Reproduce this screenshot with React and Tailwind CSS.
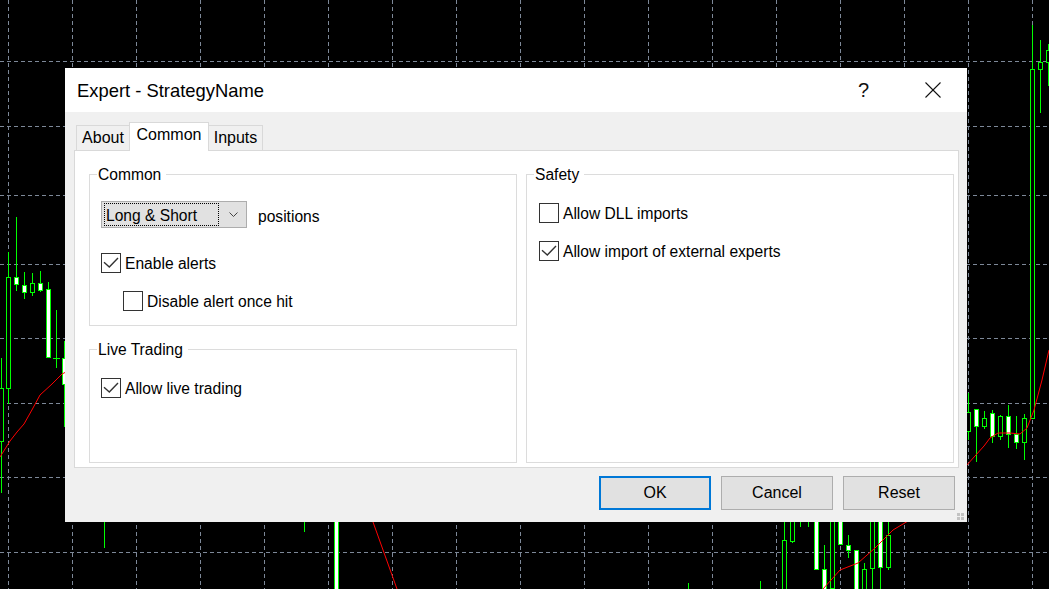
import React from "react";

const GRID_X = Array.from({ length: 17 }, (_, i) => 8 + i * 64);
const GRID_Y = [61, 126, 195, 264, 338, 403, 477, 552];

// [x, wickTop, wickBottom, bodyTop, bodyBottom, white body]
const CANDLES = [
  [1, 358, 493, 388, 441, false],
  [8, 252, 404, 277, 388, false],
  [16, 217, 291, 277, 284, true],
  [24, 272, 299, 285, 292, true],
  [32, 273, 296, 283, 292, false],
  [40, 271, 292, 283, 290, true],
  [48, 282, 358, 289, 357, true],
  [64, 341, 427, 358, 384, true],
  [968, 393, 440, 412, 431, false],
  [976, 409, 462, 409, 426, true],
  [984, 411, 429, 418, 426, false],
  [992, 410, 443, 413, 436, true],
  [1000, 415, 440, 416, 436, false],
  [1008, 405, 448, 416, 434, true],
  [1016, 416, 449, 434, 442, true],
  [1024, 414, 460, 418, 442, false],
  [1032, 25, 418, 69, 418, false],
  [1040, 40, 113, 62, 69, false],
  [1048, 44, 86, 50, 62, false],
  [336, 505, 600, 505, 600, true],
  [784, 505, 600, 540, 600, false],
  [792, 505, 543, 505, 541, false],
  [816, 505, 569, 505, 569, true],
  [824, 545, 600, 569, 600, true],
  [832, 505, 600, 505, 588, false],
  [840, 505, 544, 505, 544, true],
  [848, 535, 558, 545, 550, true],
  [856, 550, 600, 550, 600, true],
  [864, 563, 600, 569, 600, false],
  [872, 505, 600, 505, 568, false],
  [880, 505, 600, 505, 567, true],
  [888, 505, 570, 535, 567, false],
];

// plain wicks with no body
const WICKS = [
  [104, 505, 548],
  [304, 505, 532],
  [688, 583, 600],
  [760, 581, 600],
  [800, 505, 527],
  [808, 505, 527],
];

const RED_LINES = [
  "0,457 10,441 17,432 24,424 33,408 40,395 52,384 62,374 66,372",
  "966,466 975,456 984,446 990,438 998,433 1010,433 1020,434 1027,428 1034,410 1042,380 1049,350",
  "368,505 373,522 397,589",
  "823,589 840,570 858,563 875,548 893,530 913,518",
];

function Chart() {
  return (
    <svg className="absolute inset-0" width="1049" height="589" shapeRendering="crispEdges">
      {GRID_X.map((x) => (
        <line key={"gx" + x} x1={x + 0.5} y1="0" x2={x + 0.5} y2="589" stroke="#7d8898" strokeDasharray="4 3" />
      ))}
      {GRID_Y.map((y) => (
        <line key={"gy" + y} x1="0" y1={y + 0.5} x2="1049" y2={y + 0.5} stroke="#7d8898" strokeDasharray="4 3" />
      ))}
      {WICKS.map(([x, t, b]) => (
        <line key={"w" + x} x1={x + 0.5} y1={t} x2={x + 0.5} y2={b} stroke="#00ff00" />
      ))}
      {CANDLES.map(([x, wt, wb, bt, bb, white]) => (
        <g key={"c" + x}>
          <line x1={x + 0.5} y1={wt} x2={x + 0.5} y2={wb} stroke="#00ff00" />
          <rect x={x - 1.5} y={bt + 0.5} width="4" height={bb - bt} fill={white ? "#ffffff" : "#000000"} stroke="#00ff00" />
        </g>
      ))}
      <line x1="56.5" y1="310" x2="56.5" y2="368" stroke="#00ff00" />
      <line x1="53" y1="358.5" x2="60" y2="358.5" stroke="#00ff00" />
      {RED_LINES.map((p, i) => (
        <polyline key={"r" + i} points={p} fill="none" stroke="#ff0000" shapeRendering="auto" />
      ))}
    </svg>
  );
}

function Check({ checked }) {
  return (
    <span className="w-[20px] h-[20px] border border-[#333333] bg-white flex items-center justify-center shrink-0">
      {checked && (
        <svg width="18" height="18" viewBox="0 0 18 18">
          <polyline points="2,8.3 7.3,13 16,4" fill="none" stroke="#333333" strokeWidth="1.4" />
        </svg>
      )}
    </span>
  );
}

function CheckRow({ checked, label, className = "" }) {
  return (
    <div className={`flex items-center gap-[4px] h-[20px] ${className}`}>
      <Check checked={checked} />
      <span className="text-[15.6px] leading-[20px] pt-[1px] text-black whitespace-nowrap">{label}</span>
    </div>
  );
}

function Group({ title, className = "", children }) {
  return (
    <fieldset className={`border border-[#dcdcdc] p-0 m-0 ${className}`}>
      <legend className="ml-[7px] pl-[1px] pr-[5px] text-[15.6px] leading-[18px] pt-[1px] text-black">{title}</legend>
      {children}
    </fieldset>
  );
}

function Button({ children, primary }) {
  return (
    <div
      className={`w-[112px] h-[34px] bg-[#e1e1e1] flex items-center justify-center text-[16px] text-black ${
        primary ? "border-2 border-[#0078d7]" : "border border-[#adadad]"
      }`}
    >
      {children}
    </div>
  );
}

export default function App() {
  return (
    <div className="relative w-[1049px] h-[589px] bg-black overflow-hidden font-['Liberation_Sans',Arial,sans-serif]">
      <Chart />

      {/* Dialog window */}
      <div className="absolute left-[65px] top-[68px] w-[902px] h-[454px] bg-[#f0f0f0] flex flex-col">
        {/* Title bar */}
        <div className="h-[44px] bg-white flex items-center shrink-0">
          <div className="pl-[12px] pt-[1px] text-[18.4px] text-black">Expert - StrategyName</div>
          <div className="ml-auto flex h-full">
            <div className="w-[69px] h-full flex items-center justify-center text-[20px] text-[#111]">?</div>
            <div className="w-[69px] h-full flex items-center justify-center">
              <svg width="16" height="16" viewBox="0 0 16 16">
                <line x1="0.5" y1="0.5" x2="15.5" y2="15.5" stroke="#111" strokeWidth="1.1" />
                <line x1="15.5" y1="0.5" x2="0.5" y2="15.5" stroke="#111" strokeWidth="1.1" />
              </svg>
            </div>
          </div>
        </div>

        {/* Body */}
        <div className="flex-1 pl-[9px] pr-[8px] pt-[10px] flex flex-col">
          {/* Tabs */}
          <div className="flex items-end h-[28px] pl-[2px]">
            <div className="w-[54px] h-[25px] border border-b-0 border-[#d9d9d9] bg-[#f0f0f0] flex items-center justify-center text-[16px] text-black">
              About
            </div>
            <div className="relative z-10 ml-[-1px] mb-[-1px] w-[80px] h-[29px] border border-b-0 border-[#d9d9d9] bg-white flex items-center justify-center pb-[4px] text-[16px] text-black">
              Common
            </div>
            <div className="ml-[-1px] w-[55px] h-[25px] border border-b-0 border-[#d9d9d9] bg-[#f0f0f0] flex items-center justify-center text-[16px] text-black">
              Inputs
            </div>
          </div>

          {/* Tab panel */}
          <div className="h-[318px] bg-white border border-[#d9d9d9] flex pl-[14px] pt-[14px] gap-[9px]">
            <div className="w-[428px] flex flex-col">
              <Group title="Common" className="h-[161px]">
                <div className="pl-[11px] pt-[17px]">
                  <div className="flex items-center">
                    <div className="w-[146px] h-[27px] bg-[#e1e1e1] border border-[#adadad] flex items-center pl-[2px]">
                      <div className="w-[115px] h-[23px] border border-dotted border-black flex items-center pl-[1px] pt-[2px] text-[15.6px] text-black whitespace-nowrap">
                        Long &amp; Short
                      </div>
                      <svg className="ml-[10px]" width="9" height="5" viewBox="0 0 9 5">
                        <polyline points="0.5,0.5 4.5,4.5 8.5,0.5" fill="none" stroke="#444444" />
                      </svg>
                    </div>
                    <span className="ml-[11px] pt-[4px] text-[15.6px] text-black">positions</span>
                  </div>
                  <CheckRow checked label="Enable alerts" className="mt-[25px]" />
                  <CheckRow label="Disable alert once hit" className="mt-[18px] ml-[22px]" />
                </div>
              </Group>
              <Group title="Live Trading" className="mt-[14px] h-[123px]">
                <div className="pl-[11px] pt-[19px]">
                  <CheckRow checked label="Allow live trading" />
                </div>
              </Group>
            </div>
            <Group title="Safety" className="w-[428px] h-[298px]">
              <div className="pl-[12px] pt-[19px]">
                <CheckRow label="Allow DLL imports" />
                <CheckRow checked label="Allow import of external experts" className="mt-[18px]" />
              </div>
            </Group>
          </div>

          {/* Buttons */}
          <div className="flex justify-end gap-[10px] mt-[8px] pr-[4px]">
            <Button primary>OK</Button>
            <Button>Cancel</Button>
            <Button>Reset</Button>
          </div>
        </div>

        {/* Resize grip */}
        <div className="absolute right-[3px] bottom-[2px] grid grid-cols-2 gap-[1px]">
          <span className="w-[3px] h-[3px] bg-[#c2c2c2]" />
          <span className="w-[3px] h-[3px] bg-[#c2c2c2]" />
          <span className="w-[3px] h-[3px] bg-[#c2c2c2]" />
          <span className="w-[3px] h-[3px] bg-[#c2c2c2]" />
        </div>
      </div>
    </div>
  );
}
